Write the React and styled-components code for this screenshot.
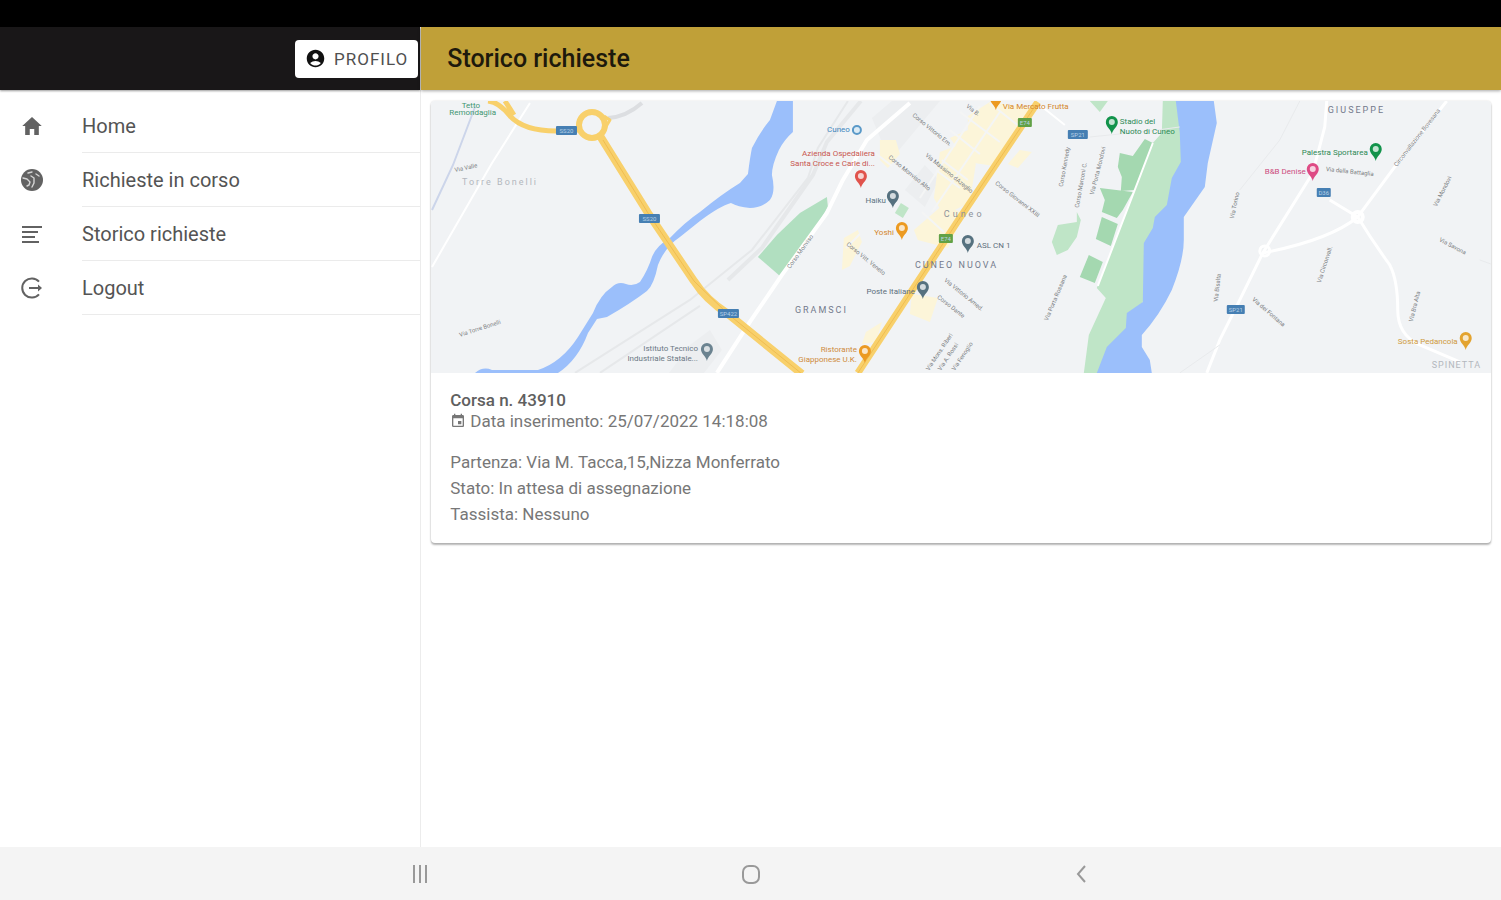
import styled, { createGlobalStyle } from 'styled-components';
import { IoMdHome } from 'react-icons/io';
import { MdAccountCircle, MdEvent } from 'react-icons/md';

const GlobalStyle = createGlobalStyle`
  * { box-sizing: border-box; }
  body { margin: 0; font-family: Roboto, sans-serif; background: #fff; color: #4a4a4a; }
`;

const Screen = styled.div`display: flex; flex-direction: column; min-height: 100vh;`;
const StatusBar = styled.div`height: 27px; background: #000;`;
const Split = styled.div`display: flex; flex: 1;`;

const Side = styled.aside`flex: 0 0 28%; box-sizing: content-box; border-right: 1px solid #ececec;`;
const SideBar = styled.header`
  display: flex; align-items: center; justify-content: flex-end;
  height: 63px; padding-right: 2px; background: #191718;
  box-shadow: 0 1px 2px rgba(0, 0, 0, 0.4);
`;
const ProfileButton = styled.button`
  display: flex; align-items: center; gap: 8px;
  height: 38px; padding: 0 10px; border: 0; border-radius: 4px;
  background: #fff; color: #505050; font: 400 17px Roboto, sans-serif; letter-spacing: 1px;
  svg { color: #111; }
`;

const Menu = styled.ul`list-style: none; margin: 0; padding: 9px 0 0;`;
const MenuLink = styled.a`
  display: flex; align-items: center; padding-left: 20px;
  color: #545454; font-size: 20px; text-decoration: none;
  svg { flex: none; color: #626262; }
`;
const MenuLabel = styled.span`
  flex: 1; height: 54px; margin-left: 38px; line-height: 54px;
  border-bottom: 1px solid #ebebeb;
`;

const Main = styled.main`flex: 1; min-width: 0;`;
const TitleBar = styled.header`
  display: flex; align-items: center; height: 63px; padding: 0 26px;
  background: #c0a038; box-shadow: 0 1px 3px rgba(0, 0, 0, 0.35);
`;
const Title = styled.h1`margin: 0; color: #1d190c; font-size: 25px; font-weight: 500;`;

const Card = styled.article`
  margin: 11px 10px; overflow: hidden; border-radius: 4px; background: #fff;
  box-shadow: 0 2px 2px rgba(0, 0, 0, 0.28), 0 0 2px rgba(0, 0, 0, 0.16);
`;
const MapView = styled.svg`
  display: block; width: 100%; height: auto; background: #f1f3f5;
  font-family: Roboto, sans-serif;
`;
const CardBody = styled.div`padding: 17px 19px 16px; color: #777; font-size: 17px;`;
const RideTitle = styled.h2`margin: 0; color: #606060; font-size: 17px; font-weight: 500; line-height: 21px;`;
const RideDate = styled.p`
  display: flex; align-items: center; gap: 4px; margin: 0 0 17px; line-height: 21px;
`;
const RideLine = styled.p`margin: 0; line-height: 26px;`;

const SystemNav = styled.nav`
  display: flex; justify-content: center; height: 53px; background: #f4f4f4;
`;
const SystemButton = styled.button`
  display: flex; align-items: center; justify-content: center;
  width: 22%; padding: 0; border: 0; background: none; color: #999;
`;

const EarthIcon = () => (
  <svg width="24" height="24" viewBox="0 0 24 24" aria-hidden="true">
    <circle cx="12" cy="12" r="11" fill="currentColor" />
    <path
      d="M3 10l4 1 3 3-1 3-2 1M11 8l3 2v5l-2 4M8 5l4-1M16 6l3 2"
      fill="none" stroke="#d4d4d4" strokeWidth="1.4" strokeLinecap="round" strokeLinejoin="round"
    />
  </svg>
);

const LinesIcon = () => (
  <svg width="24" height="24" viewBox="0 0 24 24" stroke="currentColor" strokeWidth="2" aria-hidden="true">
    <path d="M2 5h20M2 10h16M2 15h13M2 20h17" />
  </svg>
);

const LogoutIcon = () => (
  <svg width="24" height="24" viewBox="0 0 24 24" fill="none" stroke="currentColor" strokeWidth="2" aria-hidden="true">
    <path d="M19 5.6A9.6 9.6 0 1 0 19 18.4" />
    <path d="M9 12h10" />
    <path d="M18 8.5l4 3.5-4 3.5z" fill="currentColor" stroke="none" />
  </svg>
);

const menu = [
  { label: 'Home', icon: <IoMdHome size={24} /> },
  { label: 'Richieste in corso', icon: <EarthIcon /> },
  { label: 'Storico richieste', icon: <LinesIcon /> },
  { label: 'Logout', icon: <LogoutIcon /> },
];

// [x, y, angle, name]
const streets = [
  [912, 116, 39, 'Corso Vittorio Em.'],
  [888, 158, 39, 'Corso Monviso Alto'],
  [925, 156, 39, 'Via Massimo dAzeglio'],
  [966, 107, 38, 'Via B.'],
  [846, 245, 39, 'Corso Vitt. Veneto'],
  [944, 281, 39, 'Via Vittorio Amed.'],
  [937, 298, 38, 'Corso Dante'],
  [790, 269, -54, 'Corso Monviso'],
  [929, 371, -56, 'Via Mons. Riberi'],
  [941, 371, -56, 'Via A. Rossi'],
  [955, 371, -56, 'Via Fenoglio'],
  [1063, 187, -80, 'Corso Kennedy'],
  [1079, 208, -80, 'Corso Marconi C.'],
  [1094, 195, -76, 'Via Porta Mondovi'],
  [995, 184, 38, 'Corso Giovanni XXIII'],
  [1048, 321, -67, 'Via Porta Rossana'],
  [1234, 219, -78, 'Via Torino'],
  [1218, 302, -84, 'Via Bisalta'],
  [1326, 171, 6, 'Via della Battaglia'],
  [1437, 207, -63, 'Via Mondovi'],
  [1439, 241, 28, 'Via Savona'],
  [1321, 283, -72, 'Via Circonvall.'],
  [1413, 322, -76, 'Via Bra Alta'],
  [1252, 300, 41, 'Via dei Fontana'],
  [1397, 167, -52, 'Circonvallazione Bovesana'],
  [455, 172, -12, 'Via Valle'],
  [460, 337, -18, 'Via Torre Bonelli'],
];

const places = [
  { x: 496, y: 115, anchor: 'end', fill: '#3f9671', lines: ['Remondaglia'] },
  { x: 480, y: 108, anchor: 'end', fill: '#3f9671', lines: ['Tetto'] },
  { x: 850, y: 132, anchor: 'end', fill: '#3d86bd', lines: ['Cuneo'] },
  { x: 875, y: 156, anchor: 'end', fill: '#c8564f', lines: ['Azienda Ospedaliera', 'Santa Croce e Carle di...'] },
  { x: 886, y: 203, anchor: 'end', fill: '#5d7482', lines: ['Haiku'] },
  { x: 894, y: 235, anchor: 'end', fill: '#d4862b', lines: ['Yoshi'] },
  { x: 977, y: 248, anchor: 'start', fill: '#5d6f7c', lines: ['ASL CN 1'] },
  { x: 915, y: 294, anchor: 'end', fill: '#5d6f7c', lines: ['Poste Italiane'] },
  { x: 698, y: 351, anchor: 'end', fill: '#6b7884', lines: ['Istituto Tecnico', 'Industriale Statale...'] },
  { x: 857, y: 352, anchor: 'end', fill: '#cf8b3c', lines: ['Ristorante', 'Giapponese U.K.'] },
  { x: 1003, y: 109, anchor: 'start', fill: '#d4862b', lines: ['Via Mercato Frutta'] },
  { x: 1120, y: 124, anchor: 'start', fill: '#2d8a55', lines: ['Stadio del', 'Nuoto di Cuneo'] },
  { x: 1368, y: 155, anchor: 'end', fill: '#2d8a55', lines: ['Palestra Sportarea'] },
  { x: 1306, y: 174, anchor: 'end', fill: '#cc4b80', lines: ['B&B Denise'] },
  { x: 1458, y: 344, anchor: 'end', fill: '#cf9a3c', lines: ['Sosta Pedancola'] },
];

const districts = [
  [462, 185, 'Torre Bonelli', '#b3b7bd', 2],
  [944, 217, 'Cuneo', '#8d929a', 3],
  [915, 268, 'CUNEO NUOVA', '#737a8c', 2],
  [795, 313, 'GRAMSCI', '#737a8c', 2],
  [1328, 113, 'GIUSEPPE', '#737a8c', 2],
  [1432, 368, 'SPINETTA', '#b3b7bd', 1],
];

const badges = [
  [556, 126, 21, '#467fb3', 'SS20'],
  [639, 214, 21, '#467fb3', 'SS20'],
  [718, 309, 21, '#467fb3', 'SP422'],
  [1068, 130, 20, '#467fb3', 'SP21'],
  [1227, 305, 18, '#467fb3', 'SP21'],
  [1317, 188, 14, '#467fb3', 'D36'],
  [939, 234, 14, '#61a146', 'E74'],
  [1018, 118, 14, '#61a146', 'E74'],
];

const pins = [
  [861, 178, '#e0534c'],
  [893, 198, '#56717f'],
  [902, 230, '#ec9a21'],
  [968, 243, '#56717f'],
  [923, 289, '#56717f'],
  [707, 351, '#6b8390'],
  [865, 353, '#ec9a21'],
  [996, 100, '#ec9a21'],
  [1112, 124, '#12934b'],
  [1376, 151, '#12934b'],
  [1313, 171, '#de4b85'],
  [1466, 340, '#e3a32f'],
];

function RideMap() {
  return (
    <MapView viewBox="431 101 1060 272" role="img" aria-label="Mappa di Cuneo">
      {/* built-up areas */}
      <path fill="#eceef0" d="M690 345l20-15 12 20-18 23h-35zM872 118l20-17h48l-50 60zM905 190l20-25 14 15-14 27z" />
      <path
        fill="#fcf5d9"
        d="M968 116l22-14 42 6-24 36-14 22-26-4-18-24 18-8zM940 152l16-6 20 18-6 38-26 14-10-18zM914 230l30-26 20 10-16 34-30-8zM844 238l14-8 4 12-12 24-8 4zM880 140l16 0 4 14-12 14-8-8zM912 294l26 4-8 24-20-8zM866 332l16-10-6 20-14 2zM1020 150l12 2-14 16-10-4z"
      />
      <g fill="none" stroke="#f4f5f5" strokeWidth="2">
        <path d="M950 130l30 24M960 112l40 30M936 170l24 18M922 212l22 20M980 106l-60 92M1000 112l-68 100M846 248l14-14M874 152l18 14M990 103l30 24M942 160l26 20" />
      </g>
      {/* parks */}
      <g fill="#bfe5c7">
        <path d="M1163 101L1162 133 1153 143 1097 288 1106 298 1089 335 1084 373H1110L1190 200 1190 101Z" />
        <path d="M1077 212L1081 220 1077 237 1068 250 1057 255 1052 242 1058 225 1077 222ZM1090 101H1108L1100 112Z" />
        <path d="M901 203L909 208 903 218 895 213Z" />
      </g>
      <g fill="#a4d8b0">
        <path d="M827 197L828 207 810 237 780 276 758 257 777 235 800 213Z" fill="#b1dfc0" />
        <path d="M1145 139L1153 143 1135 190 1121 191 1122 177 1118 167 1120 153 1133 156Z" />
        <path d="M1100 188L1133 192 1123 210 1117 218 1102 212 1105 200ZM1102 217L1118 224 1111 246 1096 239ZM1089 255L1103 262 1095 283 1080 277Z" />
      </g>
      {/* rivers */}
      <g fill="#9bbffb">
        <path d="M777 101H793V132Q784 140 779 150 772 165 772 175 776 192 770 200 762 208 750 208 738 207 731 203 720 206 700 221L680 237Q665 247 658 265 654 285 647 291 630 304 607 317L597 319 588 333Q578 360 558 373H475Q483 366 492 370L538 370Q562 362 578 337L593 313Q600 295 612 287 618 281 626 284 633 287 640 282 648 270 652 257 657 245 668 240 685 222 700 212 722 194 740 183L748 174Q750 158 752 148 760 132 770 120Z" />
        <path d="M1176 101L1180 133 1181 162 1172 178 1167 205 1155 217 1153 228 1144 243 1143 302 1127 313 1126 328 1107 347 1097 373H1152L1150 360 1142 347V335Q1160 315 1172 290 1184 260 1184 240V217L1205 187 1208 163 1217 123 1214 101Z" />
      </g>
      <path d="M475 107L453 165 432 210" fill="none" stroke="#ccd5ea" strokeWidth="2" />
      {/* railway */}
      <g fill="none" stroke="#e6e8ea">
        <path d="M861 101L827 142 813 175 762 248 728 280" strokeWidth="4" />
        <path d="M848 101L818 148 808 178 752 250 690 300 575 373M600 373L700 306" strokeWidth="2" />
        <path d="M608 118Q626 117 642 103" strokeWidth="4" stroke="#dcdee1" />
      </g>
      {/* local roads */}
      <g fill="none" stroke="#fff" strokeWidth="4" strokeLinejoin="round">
        <path d="M910 103L867 140 843 180 827 213 782 275 750 322 717 373" />
        <path d="M530 103L492 163 432 267" strokeWidth="2" />
        <path d="M1327 101L1325 127 1313 173 1263 253 1240 300 1220 340 1207 373" strokeWidth="3" />
        <path d="M1263 253Q1330 240 1358 217L1395 167 1447 101" strokeWidth="3" />
        <path d="M1330 200L1358 217Q1372 240 1390 265 1398 280 1398 310 1398 335 1420 345L1460 362" strokeWidth="3" />
        <path d="M1040 105L1065 125M1153 143L1098 286" strokeWidth="2" />
        <circle cx="1265" cy="251" r="5" strokeWidth="3" />
        <circle cx="1358" cy="217" r="5" strokeWidth="4" />
      </g>
      <g fill="none" stroke="#e8eaec">
        <path d="M1180 127L1150 131 1090 137M1220 345L1180 373M1300 101L1280 140 1240 190M1480 260L1491 264" />
      </g>
      {/* main roads */}
      <g fill="none" stroke="#f8d06b" strokeLinejoin="round">
        <path d="M488 101Q499 102 510 116 525 132 560 131L578 130M505 101L514 115" strokeWidth="5" />
        <circle cx="592" cy="125" r="13" strokeWidth="6" />
        <path d="M604 116l6 4-6 10" strokeWidth="3" />
        <path d="M600 136L648 213 694 281Q706 300 728 314L802 374" strokeWidth="8" />
        <path d="M1038 102L960 218 915 286 858 373" strokeWidth="7" />
      </g>
      <g fill="none" stroke="#efbd51">
        <path d="M603 140L648 213 694 281 728 314 802 374M1036 105L960 218 858 373" strokeWidth="1" />
      </g>

      <g fill="#7b7e82" fontSize="6">
        {streets.map(([x, y, angle, name]) => (
          <text key={`${x}-${y}`} transform={`translate(${x} ${y}) rotate(${angle})`}>{name}</text>
        ))}
      </g>
      {districts.map(([x, y, name, fill, spacing]) => (
        <text key={name} x={x} y={y} fill={fill} fontSize="9" letterSpacing={spacing}>{name}</text>
      ))}
      {places.map(({ x, y, anchor, fill, lines }) => (
        <text key={lines[0]} fill={fill} fontSize="8" textAnchor={anchor}>
          {lines.map((line, i) => <tspan key={line} x={x} y={y + i * 10}>{line}</tspan>)}
        </text>
      ))}
      {badges.map(([x, y, width, fill, name]) => (
        <g key={`${x}-${y}`}>
          <rect x={x} y={y} width={width} height="9" rx="1" fill={fill} />
          <text x={x + width / 2} y={y + 7} fontSize="6" fill="#b9d1e6" textAnchor="middle">{name}</text>
        </g>
      ))}
      <circle cx="857" cy="130" r="4" fill="#dcebf5" stroke="#5a99c8" strokeWidth="2" />
      {pins.map(([x, y, fill]) => (
        <g key={`${x}-${y}`} transform={`translate(${x} ${y})`}>
          <path d="M0 10C-1 5-6 3-6-2A6 6 0 0 1 6-2C6 3 1 5 0 10Z" fill={fill} />
          <circle cy="-2" r="3" fill="#fff" fillOpacity="0.75" />
        </g>
      ))}
    </MapView>
  );
}

export default function App() {
  return (
    <Screen>
      <GlobalStyle />
      <StatusBar />
      <Split>
        <Side>
          <SideBar>
            <ProfileButton type="button">
              <MdAccountCircle size={21} />
              PROFILO
            </ProfileButton>
          </SideBar>
          <nav>
            <Menu>
              {menu.map(({ label, icon }) => (
                <li key={label}>
                  <MenuLink href="#">
                    {icon}
                    <MenuLabel>{label}</MenuLabel>
                  </MenuLink>
                </li>
              ))}
            </Menu>
          </nav>
        </Side>
        <Main>
          <TitleBar>
            <Title>Storico richieste</Title>
          </TitleBar>
          <Card>
            <RideMap />
            <CardBody>
              <RideTitle>Corsa n. 43910</RideTitle>
              <RideDate>
                <MdEvent size={16} />
                Data inserimento: 25/07/2022 14:18:08
              </RideDate>
              <RideLine>Partenza: Via M. Tacca,15,Nizza Monferrato</RideLine>
              <RideLine>Stato: In attesa di assegnazione</RideLine>
              <RideLine>Tassista: Nessuno</RideLine>
            </CardBody>
          </Card>
        </Main>
      </Split>
      <SystemNav>
        <SystemButton type="button" aria-label="App recenti">
          <svg width="20" height="20" viewBox="0 0 20 20" stroke="currentColor" strokeWidth="2">
            <path d="M4 1v18M10 1v18M16 1v18" />
          </svg>
        </SystemButton>
        <SystemButton type="button" aria-label="Schermata Home">
          <svg width="20" height="20" viewBox="0 0 20 20" fill="none" stroke="currentColor" strokeWidth="2">
            <rect x="2" y="2" width="16" height="17" rx="6" />
          </svg>
        </SystemButton>
        <SystemButton type="button" aria-label="Indietro">
          <svg width="20" height="20" viewBox="0 0 20 20" fill="none" stroke="currentColor" strokeWidth="2">
            <path d="M14 2l-7 8 7 8" />
          </svg>
        </SystemButton>
      </SystemNav>
    </Screen>
  );
}
